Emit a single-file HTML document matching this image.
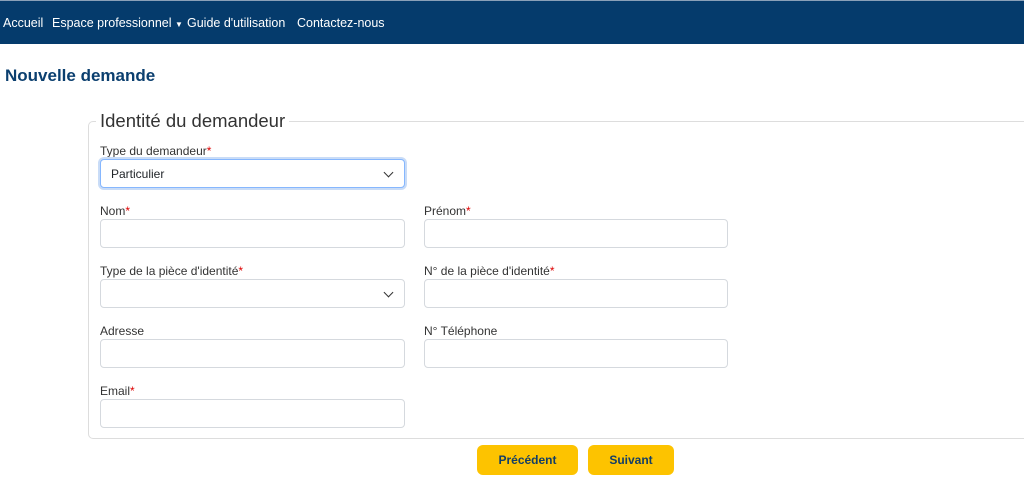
<!DOCTYPE html>
<html><head><meta charset="utf-8"><style>
*{box-sizing:border-box;margin:0;padding:0}
body{width:1024px;height:483px;background:#fff;font-family:"Liberation Sans",sans-serif;position:relative;overflow:hidden;color:#212529}
.nav{position:absolute;left:0;top:0;width:1024px;height:44px;background:#053b6c;border-top:1px solid #8aa0b8}
.nav span{position:absolute;top:15px;color:#fff;font-size:12.5px}
h1{position:absolute;left:5px;top:66px;font-size:17px;color:#0b3f6f;font-weight:bold}
.fs{position:absolute;left:88px;top:121px;width:960px;height:318px;border:1px solid #ddd;border-radius:5px}
.lg{position:absolute;left:96px;top:110px;background:#fff;padding:0 4px;font-size:18.5px;color:#333}
.lb{position:absolute;font-size:12px;color:#333}
.lb i{color:#d00;font-style:normal}
.in{position:absolute;height:29px;border:1px solid #d5d9de;border-radius:4px;background:#fff}
.sel::after{content:"";position:absolute;right:12px;top:9px;width:6px;height:6px;border-right:1.5px solid #333;border-bottom:1.5px solid #333;transform:rotate(45deg)}
.btn{position:absolute;top:445px;height:30px;background:#fdc300;border-radius:6px;color:#133e66;font-weight:bold;font-size:12px;text-align:center;line-height:30px}
</style></head><body>
<div class="nav"><span style="left:3px">Accueil</span><span style="left:52px">Espace professionnel <span style="position:static;font-size:8px">▼</span></span><span style="left:187px">Guide d'utilisation</span><span style="left:297px">Contactez-nous</span></div>
<h1>Nouvelle demande</h1>
<div class="fs"></div>
<div class="lg">Identité du demandeur</div>
<div class="lb" style="left:100px;top:144px">Type du demandeur<i>*</i></div>
<div class="in sel" style="left:100px;top:159px;width:305px;border-color:#86b7fe;box-shadow:0 0 0 2px #c9dcf7;font-size:12px;padding:7px 10px">Particulier</div>
<div class="lb" style="left:100px;top:204px">Nom<i>*</i></div>
<div class="in" style="left:100px;top:219px;width:305px"></div>
<div class="lb" style="left:424px;top:204px">Prénom<i>*</i></div>
<div class="in" style="left:424px;top:219px;width:304px"></div>
<div class="lb" style="left:100px;top:264px">Type de la pièce d'identité<i>*</i></div>
<div class="in sel" style="left:100px;top:279px;width:305px"></div>
<div class="lb" style="left:424px;top:264px">N° de la pièce d'identité<i>*</i></div>
<div class="in" style="left:424px;top:279px;width:304px"></div>
<div class="lb" style="left:100px;top:324px">Adresse</div>
<div class="in" style="left:100px;top:339px;width:305px"></div>
<div class="lb" style="left:424px;top:324px">N° Téléphone</div>
<div class="in" style="left:424px;top:339px;width:304px"></div>
<div class="lb" style="left:100px;top:384px">Email<i>*</i></div>
<div class="in" style="left:100px;top:399px;width:305px"></div>
<div class="btn" style="left:477px;width:101px">Précédent</div>
<div class="btn" style="left:588px;width:86px">Suivant</div>
</body></html>
